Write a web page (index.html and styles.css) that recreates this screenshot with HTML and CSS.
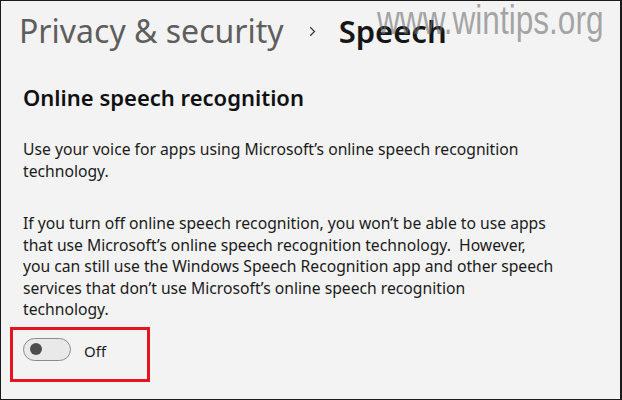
FILE: index.html
```html
<!DOCTYPE html>
<html>
<head>
<meta charset="utf-8">
<link rel="stylesheet" href="styles.css">
</head>
<body>
<div class="frame">
  <div class="crumbs">
    <span class="crumb-parent">Privacy &amp; security</span>
    <svg class="chev" width="7" height="11" viewBox="0 0 7 11"><path d="M1.2 1.2 L5.5 5.5 L1.2 9.8" fill="none" stroke="#3a3a3a" stroke-width="1.3"/></svg>
    <span class="crumb-current">Speech</span>
  </div>
  <div class="watermark">www.wintips.org</div>
  <h2 class="section-title">Online speech recognition</h2>
  <p class="desc">Use your voice for apps using Microsoft’s online speech recognition<br>technology.</p>
  <p class="desc desc2">If you turn off online speech recognition, you won’t be able to use apps<br>that use Microsoft’s online speech recognition technology.&nbsp; However,<br>you can still use the Windows Speech Recognition app and other speech<br>services that don’t use Microsoft’s online speech recognition<br>technology.</p>
  <div class="highlight">
    <div class="toggle"><div class="knob"></div></div>
    <span class="toggle-label">Off</span>
  </div>
</div>
</body>
</html>
```
FILE: styles.css
```css
html, body {
  margin: 0;
  padding: 0;
  background: #f3f3f3;
}
.frame {
  position: relative;
  box-sizing: border-box;
  width: 622px;
  height: 400px;
  border-top: 1px solid #1a1a1a;
  border-left: 1px solid #1a1a1a;
  border-right: 2px solid #1a1a1a;
  border-bottom: 1px solid #1a1a1a;
  background: #f3f3f3;
  padding: 0 0 0 22px;
  font-family: "Noto Sans", "Open Sans", sans-serif;
  color: #1b1b1b;
  overflow: hidden;
}
.crumbs {
  display: flex;
  align-items: center;
  height: 44px;
  line-height: 44px;
  margin: 8px 0 0 -4px;
  font-size: 32px;
}
.crumb-parent {
  color: #5e5e5e;
}
.chev {
  margin: 0 23px 0 25px;
}
.crumb-current {
  color: #161616;
  font-weight: 600;
  font-size: 31px;
}
.watermark {
  position: absolute;
  left: 376px;
  top: 0;
  font-family: "Liberation Sans", Arial, sans-serif;
  font-size: 40px;
  line-height: 38px;
  color: rgba(110, 110, 110, 0.6);
  transform: scaleX(0.79);
  transform-origin: left top;
  white-space: nowrap;
}
.section-title {
  margin: 30px 0 0;
  font-size: 22px;
  font-weight: 600;
  line-height: 28px;
  color: #111;
}
.desc {
  margin: 28px 0 0;
  font-size: 15.7px;
  line-height: 21.5px;
  width: 570px;
  white-space: nowrap;
  color: #1b1b1b;
}
.desc2 {
  margin-top: 31px;
}
.highlight {
  display: flex;
  align-items: center;
  box-sizing: border-box;
  width: 140px;
  height: 55px;
  margin: 6px 0 0 -13px;
  border: 3px solid #e5151f;
  padding: 0 0 10px 10px;
}
.toggle {
  box-sizing: border-box;
  width: 48px;
  height: 23px;
  border: 1px solid #8a8a8a;
  border-radius: 12px;
  background: #e9e9e9;
  display: flex;
  align-items: center;
  padding-left: 6px;
}
.knob {
  width: 12px;
  height: 12px;
  border-radius: 50%;
  background: #4e4e4e;
}
.toggle-label {
  margin-left: 13px;
  font-size: 15px;
  color: #1b1b1b;
  position: relative;
  top: 2px;
}
```
